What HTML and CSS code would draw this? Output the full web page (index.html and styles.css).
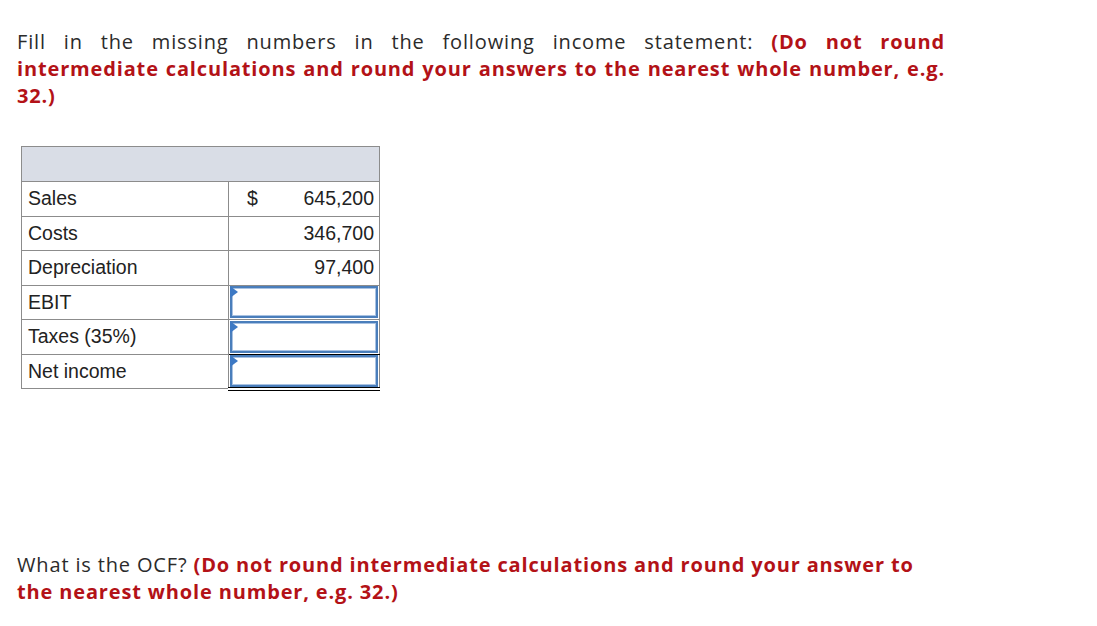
FILE: index.html
```html
<!DOCTYPE html>
<html>
<head>
<meta charset="utf-8">
<link rel="stylesheet" href="styles.css">
</head>
<body>
<div class="page">
  <p class="prompt justify">Fill in the missing numbers in the following income statement: <b class="hint">(Do not round intermediate calculations and round your answers to the nearest whole number, e.g. 32.)</b></p>

  <table class="stmt">
    <tr class="head"><td colspan="2"></td></tr>
    <tr><td class="label">Sales</td><td class="val"><span class="cur">$</span><span>645,200</span></td></tr>
    <tr><td class="label">Costs</td><td class="val"><span>346,700</span></td></tr>
    <tr><td class="label">Depreciation</td><td class="val"><span>97,400</span></td></tr>
    <tr><td class="label">EBIT</td><td class="inp"><div class="box"><span class="flag"></span></div></td></tr>
    <tr><td class="label">Taxes (35%)</td><td class="inp under"><div class="box"><span class="flag"></span></div></td></tr>
    <tr><td class="label">Net income</td><td class="inp dbl"><div class="box"><span class="flag"></span></div></td></tr>
  </table>

  <p class="prompt q2">What is the OCF? <b class="hint">(Do not round intermediate calculations and round your answer to the nearest whole number, e.g. 32.)</b></p>
</div>
</body>
</html>
```
FILE: styles.css
```css
html, body {
  margin: 0;
  padding: 0;
  background: #fff;
}
.page {
  padding: 28px 0 0 17px;
}
.prompt {
  width: 928px;
  margin: 0;
  font-family: "Open Sans", "Liberation Sans", sans-serif;
  font-size: 20px;
  letter-spacing: 0.85px;
  line-height: 27px;
  color: #2b2b2b;
}
.justify {
  text-align: justify;
}
.hint {
  color: #b31217;
  font-weight: 700;
}
.stmt {
  margin: 37px 0 0 4px;
  border-collapse: collapse;
  font-family: "Liberation Sans", Arial, sans-serif;
  font-size: 19.5px;
  color: #222;
}
.stmt tr {
  height: 34.5px;
}
.stmt td {
  border: 1px solid #8c8c8c;
  padding: 0;
}
.stmt .head {
  height: 35px;
}
.stmt .head td {
  background: #d9dde6;
}
.label {
  width: 200px;
  padding: 0 0 0 6px !important;
}
.val {
  width: 150px;
}
.val, .inp {
  text-align: right;
}
.val span {
  padding-right: 5px;
}
.val .cur {
  float: left;
  padding-left: 18px;
}
.inp {
  padding: 0 1px !important;
  vertical-align: middle;
}
.box {
  position: relative;
  height: 28px;
  border: 2px solid #4a7ebb;
  box-shadow: inset 0 0 0 1px #a9c2e2;
}
.flag {
  position: absolute;
  left: -2px;
  top: -2px;
  width: 0;
  height: 0;
  border-top: 6px solid transparent;
  border-bottom: 6px solid transparent;
  border-left: 8px solid #3d79c4;
}
.under {
  border-bottom: 1px solid #000 !important;
}
.dbl {
  border-bottom: 4px double #000 !important;
}
.q2 {
  margin-top: 160px;
}
```
